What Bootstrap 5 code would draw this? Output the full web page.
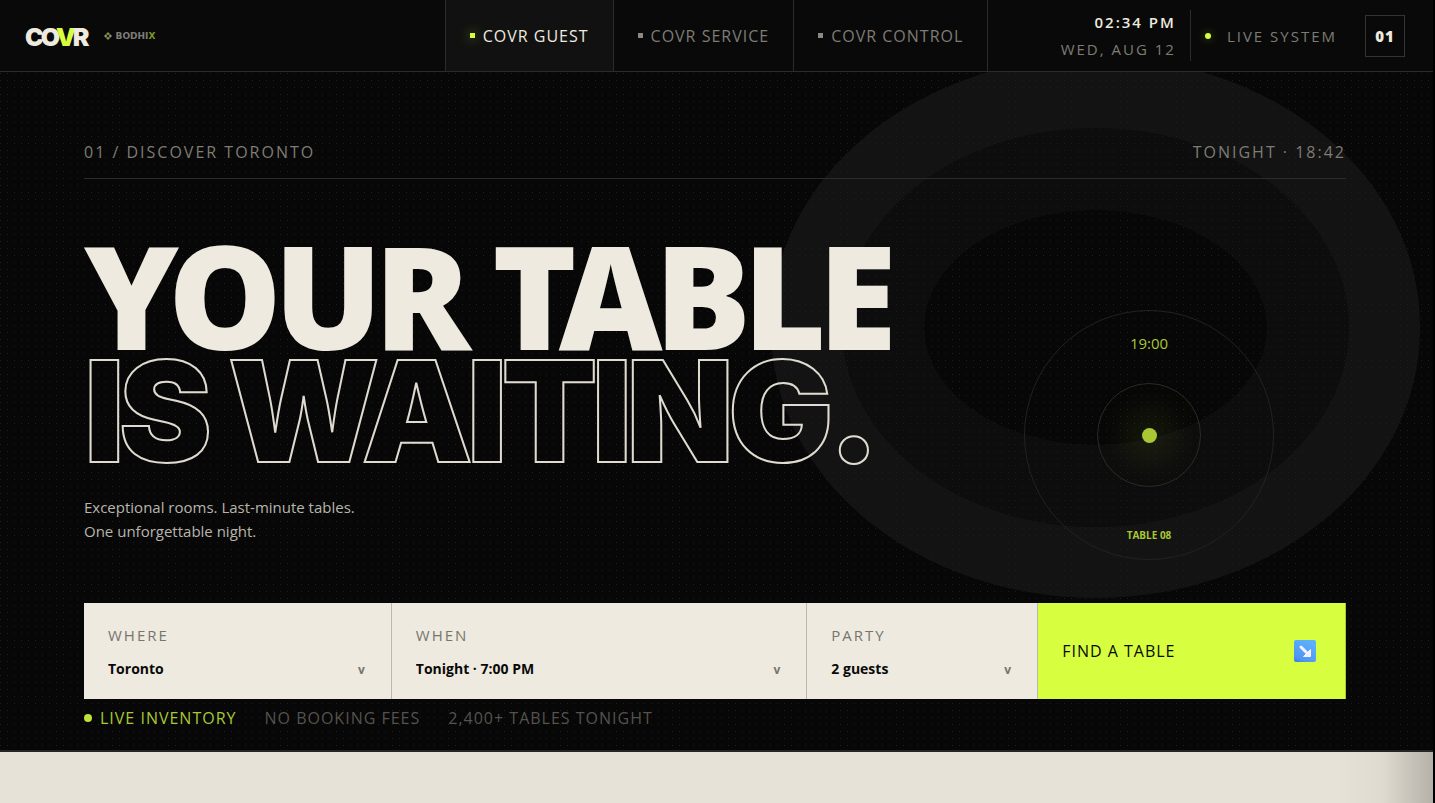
<!DOCTYPE html>
<html lang="en">
<head>
<meta charset="utf-8">
<meta name="viewport" content="width=device-width, initial-scale=1">
<title>COVR Guest</title>
<link href="https://cdn.jsdelivr.net/npm/bootstrap@5.3.0/dist/css/bootstrap.min.css" rel="stylesheet">
<style>
  :root { --ink:#070707; --paper:#eeeadf; --lime:#d7ff3f; --line:#2b2b2a; --muted:#7e7c75; }
  body { background:#000; color:var(--paper); font-family:"Open Sans","Noto Sans",sans-serif; font-size:15px; line-height:24px; }
  .page-shell { margin-right:2px; min-height:100vh; }
  a { color:inherit; text-decoration:none; }

  /* top bar */
  .top-bar { display:grid; grid-template-columns:1fr auto 1fr; height:72px; background:#090909; border-bottom:1px solid var(--line); position:relative; z-index:2; }
  .brand-area { padding-left:25px; gap:15px; }
  .brand-word { font-family:Inter,sans-serif; font-weight:900; font-size:25px; line-height:32px; letter-spacing:-3px; padding:2px 2px 0 0; }
  .brand-word span { color:var(--lime); }
  .partner { font-family:"DejaVu Sans",sans-serif; font-weight:700; font-size:9px; line-height:12px; color:#7d7c78; }
  .partner span { color:#7f9627; }
  .tab-link { padding:0 24px; gap:8px; border-left:1px solid var(--line); color:var(--muted); font-size:16px; letter-spacing:1px; }
  .tab-link:last-child { border-right:1px solid var(--line); }
  .tab-link::before { content:""; width:5px; height:5px; background:#8b8981; }
  .tab-link.active { background:#111; color:var(--paper); font-weight:500; }
  .tab-link.active::before { background:var(--lime); box-shadow:0 0 12px rgba(215,255,63,.6); }
  .status-area { padding-right:28px; letter-spacing:2px; color:var(--muted); }
  .clock-box { padding-right:14px; line-height:27px; height:51px; border-right:1px solid var(--line); }
  .clock-box strong { color:var(--paper); font-weight:600; }
  .live-dot { width:6px; height:6px; border-radius:50%; background:var(--lime); box-shadow:0 0 10px rgba(215,255,63,.4); margin:0 16px 0 14px; }
  .count-box { width:40px; height:42px; border:1px solid #333; color:var(--paper); font-weight:800; letter-spacing:1px; margin-left:28px; }

  /* hero */
  .hero { height:680px; padding:68px 87px 0 84px; background:var(--ink); border-bottom:2px solid #262624; position:relative; overflow:hidden; }
  .hero > * { position:relative; }
  .hero .plate { position:absolute; right:166px; top:138px; width:343px; height:235px; border-radius:50%; box-shadow:0 0 0 82px #0d0d0d,0 0 0 153px #131313; }
  .hero .dot-grid { position:absolute; inset:0; width:100%; height:100%; }
  .section-row { color:var(--muted); border-bottom:1px solid var(--line); padding-bottom:14px; font-size:16px; letter-spacing:2px; }
  h1 { font-family:"Noto Sans",sans-serif; font-weight:900; font-size:143px; line-height:113px; letter-spacing:-8px; margin:59px 0 0; white-space:nowrap; }
  h1 .outlined { font-family:Inter,sans-serif; font-size:140px; line-height:120px; letter-spacing:-6px; color:transparent; -webkit-text-stroke:2px #dfdbd0; }
  .lead-copy { color:#b8b5ac; margin:24px 0 0; }
  .orbit { position:absolute; right:159px; top:238px; width:250px; height:250px; border:1px solid #222; border-radius:50%; color:#a9c833; padding:20px 0 12px; }
  .orbit-core { width:104px; height:104px; border:1px solid #2a2a2a; border-radius:50%; }
  .orbit-core::before { content:""; width:15px; height:15px; border-radius:50%; background:#a9c833; box-shadow:0 0 40px 12px rgba(169,200,51,.2); }
  .orbit small { font-size:10px; font-weight:700; }

  /* search */
  .search-bar { display:grid; grid-template-columns:1fr 1.35fr .75fr 1fr; height:96px; margin-top:60px; background:var(--paper); color:#0a0a0a; }
  .search-cell { padding:20px 24px 0; border-right:1px solid #bbb8af; }
  .search-cell label { color:#77756e; letter-spacing:2px; }
  .search-cell .field { margin-top:8px; }
  .search-cell select { appearance:none; border:0; background:transparent; padding:0; font-weight:700; font-size:14px; color:#0a0a0a; min-width:0; }
  .search-cell .caret { color:#77756e; font-size:12px; font-weight:700; padding:3px 2px 0 0; }
  .find-btn { background:var(--lime); border:0; border-right:1px solid #a9c833; padding:0 29px 0 24px; color:#0a0a0a; font-size:16px; letter-spacing:1px; }
  .meta-row { gap:28px; padding-top:7px; color:#55534e; font-size:16px; letter-spacing:1px; }
  .meta-row .on { color:#a9c833; font-weight:500; gap:8px; }
  .meta-row .on::before { content:""; width:8px; height:8px; border-radius:50%; background:#bde23a; }
  .next-band { height:51px; background:linear-gradient(90deg,#e6e2d8 calc(100% - 95px),#dedacf calc(100% - 50px),#b5b1a9 100%); }
</style>
</head>
<body>
<div class="page-shell">
  <header class="top-bar">
    <div class="brand-area d-flex align-items-center">
      <a href="#" class="brand-word">CO<span>V</span>R</a>
      <a href="#" class="partner d-flex align-items-center gap-1">
        <svg width="8" height="8" viewBox="0 0 8 8"><path d="M4 0 6 2 4 3.300 2 2zM4 4.700 6 6 4 8 2 6z" fill="#7f9627"/><path d="M2 2 3.300 4 2 6 0 4zM6 2 8 4 6 6 4.700 4z" fill="#8a8985"/></svg>
        <div>BODHI<span>X</span></div>
      </a>
    </div>
    <nav class="d-flex">
      <a href="#" class="tab-link active d-flex align-items-center">COVR GUEST</a>
      <a href="#" class="tab-link d-flex align-items-center">COVR SERVICE</a>
      <a href="#" class="tab-link d-flex align-items-center">COVR CONTROL</a>
    </nav>
    <div class="status-area d-flex align-items-center justify-content-end">
      <div class="clock-box d-flex flex-column justify-content-center text-end"><strong>02:34 PM</strong><span>WED, AUG 12</span></div>
      <span class="live-dot"></span><span>LIVE SYSTEM</span>
      <span class="count-box d-flex align-items-center justify-content-center">01</span>
    </div>
  </header>

  <main>
    <section class="hero">
      <div class="plate"></div>
      <svg class="dot-grid"><defs><pattern id="dots" width="7" height="7" patternUnits="userSpaceOnUse"><rect y="1" width="1" height="1" fill="#1d1d1d"/></pattern></defs><rect width="100%" height="100%" fill="url(#dots)"/></svg>
      <div class="section-row d-flex justify-content-between"><span>01 / DISCOVER TORONTO</span><span>TONIGHT · 18:42</span></div>
      <h1><span class="d-block">YOUR TABLE</span><span class="outlined d-block">IS WAITING.</span></h1>
      <p class="lead-copy">Exceptional rooms. Last-minute tables.<br>One unforgettable night.</p>
      <div class="orbit d-flex flex-column align-items-center justify-content-between">
        <span>19:00</span>
        <div class="orbit-core position-absolute top-50 start-50 translate-middle d-flex align-items-center justify-content-center"></div>
        <small>TABLE 08</small>
      </div>
      <form class="search-bar">
        <div class="search-cell d-flex flex-column">
          <label for="where">WHERE</label>
          <div class="field d-flex align-items-center"><select id="where" class="flex-grow-1"><option>Toronto</option></select><span class="caret">v</span></div>
        </div>
        <div class="search-cell d-flex flex-column">
          <label for="when">WHEN</label>
          <div class="field d-flex align-items-center"><select id="when" class="flex-grow-1"><option>Tonight · 7:00 PM</option></select><span class="caret">v</span></div>
        </div>
        <div class="search-cell d-flex flex-column">
          <label for="party">PARTY</label>
          <div class="field d-flex align-items-center"><select id="party" class="flex-grow-1"><option>2 guests</option></select><span class="caret">v</span></div>
        </div>
        <button type="button" class="find-btn d-flex align-items-center justify-content-between">
          <span>FIND A TABLE</span>
          <svg width="22" height="22" viewBox="0 0 22 22"><defs><linearGradient id="tile" x1="0" y1="1" x2=".5" y2="0"><stop offset="0" stop-color="#3f78e0"/><stop offset=".25" stop-color="#4f97f3"/><stop offset="1" stop-color="#5cb0fb"/></linearGradient></defs><rect width="22" height="22" rx="2" fill="url(#tile)"/><path d="M7 7 13.500 13.500" stroke="#f7efff" stroke-width="3" stroke-linecap="round"/><path d="M16.500 9.500V16.500H9.500z" fill="#f7efff" stroke="#f7efff" stroke-linejoin="round"/></svg>
        </button>
      </form>
      <div class="meta-row d-flex"><span class="on d-flex align-items-center">LIVE INVENTORY</span><span>NO BOOKING FEES</span><span>2,400+ TABLES TONIGHT</span></div>
    </section>
    <section class="next-band"></section>
  </main>
</div>
<script src="https://cdn.jsdelivr.net/npm/bootstrap@5.3.0/dist/js/bootstrap.bundle.min.js"></script>
</body>
</html>
